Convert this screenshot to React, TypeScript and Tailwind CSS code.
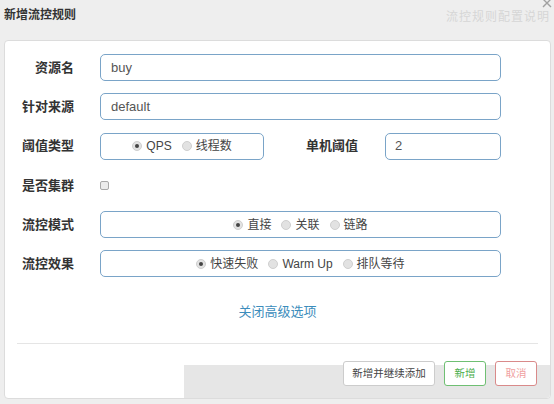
import React from 'react';

const FONT = '"Liberation Sans", "Noto Sans CJK SC", sans-serif';

// Radio dot, gray like the old browser widget
const Radio = ({ checked }: { checked?: boolean }) => (
  <span className="w-[10px] h-[10px] rounded-full bg-[#e2e2e2] border border-[#cfcfcf] flex items-center justify-center shrink-0">
    {checked && <span className="w-[4px] h-[4px] rounded-full bg-[#444]" />}
  </span>
);

const RadioGroup = ({ items, active }: { items: string[]; active: number }) => (
  <div className="flex items-center justify-center gap-[10px] w-full">
    {items.map((item, i) => (
      <label key={item} className="flex items-center gap-[4px] text-[12px] text-[#444]">
        <Radio checked={i === active} />
        <span>{item}</span>
      </label>
    ))}
  </div>
);

const Label = ({ children }: { children: React.ReactNode }) => (
  <div className="w-[69px] shrink-0 text-right text-[13px] font-bold text-[#333]">
    {children}
  </div>
);

const boxClass =
  'h-[27px] rounded-[5px] border border-[#7aa4c8] bg-white flex items-center';

export default function App() {
  return (
    <div
      className="w-[554px] h-[404px] overflow-hidden bg-[#eeeeee] relative"
      style={{ fontFamily: FONT }}
    >
      {/* header */}
      <div className="h-[40px] relative">
        <div className="pl-[4px] pt-[6px] text-[12px] font-bold text-[#333]">
          新增流控规则
        </div>
        <div className="absolute right-[4px] top-[8px] text-[12px] text-[#d6d6d6] tracking-[1px]">
          流控规则配置说明
        </div>
        <svg
          className="absolute right-[2px] top-[-2px] w-[10px] h-[10px] text-[#a0a0a0]"
          viewBox="0 0 10 10"
          fill="none"
          stroke="currentColor"
          strokeWidth={1.4}
        >
          <path d="M1 1l8 8M9 1l-8 8" />
        </svg>
      </div>

      {/* panel */}
      <div className="ml-[4px] w-[547px] h-[359px] bg-white border border-[#dcdcdc] rounded-[4px] flex flex-col">
        <div className="pt-[13px] flex flex-col gap-[12.25px]">
          <div className="flex items-center">
            <Label>资源名</Label>
            <div className={`${boxClass} ml-[26px] w-[401px] px-[10px] text-[13px] text-[#555]`}>
              buy
            </div>
          </div>
          <div className="flex items-center">
            <Label>针对来源</Label>
            <div className={`${boxClass} ml-[26px] w-[401px] px-[10px] text-[13px] text-[#555]`}>
              default
            </div>
          </div>
          <div className="flex items-center">
            <Label>阈值类型</Label>
            <div className={`${boxClass} ml-[26px] w-[164px]`}>
              <RadioGroup items={['QPS', '线程数']} active={0} />
            </div>
            <div className="w-[94px] text-right text-[13px] font-bold text-[#333]">
              单机阈值
            </div>
            <div className={`${boxClass} ml-[27px] w-[116px] px-[9px] text-[13px] text-[#555]`}>
              2
            </div>
          </div>
          <div className="flex items-center h-[27px]">
            <Label>是否集群</Label>
            <span className="ml-[26px] w-[9px] h-[9px] rounded-[2px] border border-[#a9a9a9] bg-[#ececec]" />
          </div>
          <div className="flex items-center">
            <Label>流控模式</Label>
            <div className={`${boxClass} ml-[26px] w-[401px]`}>
              <RadioGroup items={['直接', '关联', '链路']} active={0} />
            </div>
          </div>
          <div className="flex items-center">
            <Label>流控效果</Label>
            <div className={`${boxClass} ml-[26px] w-[401px]`}>
              <RadioGroup items={['快速失败', 'Warm Up', '排队等待']} active={0} />
            </div>
          </div>
        </div>

        <div className="mt-[26px] text-center text-[13px] leading-[18px] text-[#3c8dbc]">
          关闭高级选项
        </div>

        <div className="mt-[22px] mx-[12px] h-px bg-[#e5e5e5]" />

        {/* footer */}
        <div className="relative flex-1 flex justify-end items-start gap-[9px] pr-[13px] pt-[17px]">
          <div className="absolute left-[179px] right-0 top-[21px] bottom-0 bg-[#e6e6e6] rounded-br-[4px]" />
          <button className="relative h-[25px] w-[92px] rounded-[3px] border border-[#cccccc] bg-white text-[10.5px] text-[#444]">
            新增并继续添加
          </button>
          <button className="relative h-[25px] w-[42px] rounded-[3px] border border-[#6fbf73] bg-white text-[10.5px] text-[#4cae4c]">
            新增
          </button>
          <button className="relative h-[25px] w-[42px] rounded-[3px] border border-[#d98a8a] bg-white text-[10.5px] text-[#f0a0a0]">
            取消
          </button>
        </div>
      </div>
    </div>
  );
}
